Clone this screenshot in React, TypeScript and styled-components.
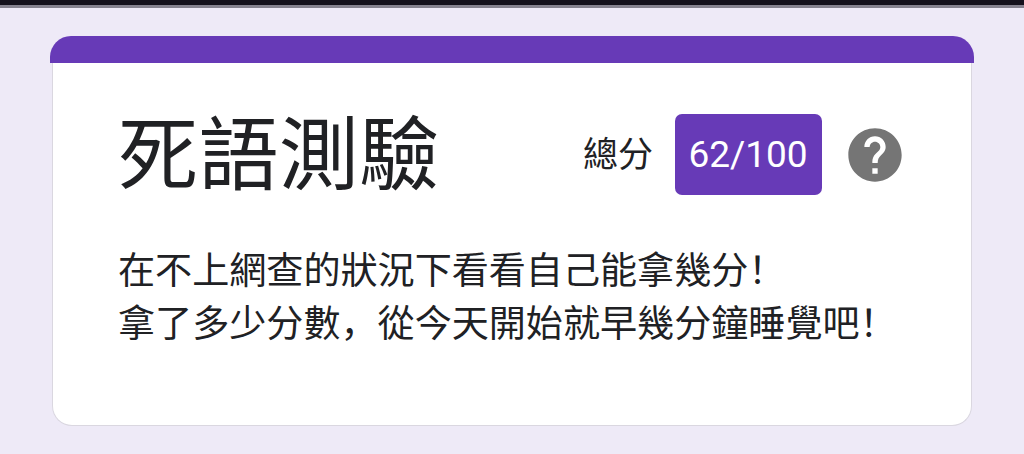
import React from "react";
import styled, { createGlobalStyle } from "styled-components";
import { MdHelp } from "react-icons/md";

const description = [
  "在不上網查的狀況下看看自己能拿幾分！",
  "拿了多少分數，從今天開始就早幾分鐘睡覺吧！",
];

export default function App() {
  return (
    <>
      <GlobalStyle />
      <Page lang="zh-Hans">
        <StatusEdge />
        <Form>
          <Accent />
          <Card>
            <Header>
              <Title>死語測驗</Title>
              <Score>
                <ScoreLabel>總分</ScoreLabel>
                <ScoreBadge>62/100</ScoreBadge>
                <HelpBtn type="button" aria-label="說明">
                  <MdHelp size={64} />
                </HelpBtn>
              </Score>
            </Header>
            <Description>
              {description.map((line) => (
                <Line key={line}>{line}</Line>
              ))}
            </Description>
          </Card>
        </Form>
      </Page>
    </>
  );
}

const GlobalStyle = createGlobalStyle`
  * {
    box-sizing: border-box;
  }

  body {
    margin: 0;
    background: #eeeaf7;
    font-family: "Noto Sans CJK SC", sans-serif;
    color: #202124;
  }
`;

const Page = styled.div`
  display: flex;
  flex-direction: column;
  height: 454px;
  overflow: hidden;
`;

const StatusEdge = styled.div`
  flex: none;
  height: 8px;
  background: #14111c;
  border-bottom: 3px solid #85828f;
`;

const Form = styled.main`
  flex: none;
  width: 924px;
  margin: 28px 0 0 50px;
`;

const Accent = styled.div`
  height: 26.5px;
  border-radius: 21px 21px 0 0;
  background: #673ab7;
`;

const Card = styled.section`
  height: 363.5px;
  margin: 0 2px;
  padding: 51.5px 69px 0 65px;
  background: #fff;
  border: 1px solid #dad7e0;
  border-top: 0;
  border-radius: 0 0 20px 20px;
`;

const Header = styled.header`
  display: flex;
  align-items: center;
  justify-content: space-between;
  height: 81px;
`;

const Title = styled.h1`
  margin: 0 0 12px;
  font-size: 80px;
  letter-spacing: 0.4px;
  line-height: 81px;
  font-weight: 400;
`;

const Score = styled.div`
  display: flex;
  align-items: center;
`;

const ScoreLabel = styled.span`
  margin-bottom: 6px;
  font-size: 35px;
  line-height: 48px;
`;

const ScoreBadge = styled.span`
  display: flex;
  align-items: center;
  justify-content: center;
  width: 147px;
  height: 81px;
  padding-right: 1px;
  margin-left: 22px;
  border-radius: 7px;
  background: #673ab7;
  color: #fff;
  font-family: Roboto, sans-serif;
  font-size: 37px;
`;

const HelpBtn = styled.button`
  display: flex;
  margin: 0 -5px 0 21px;
  padding: 0;
  border: 0;
  background: none;
  color: #757575;
`;

const Description = styled.div`
  margin-top: 47px;
`;

const Line = styled.p`
  margin: 0;
  font-size: 37.1px;
  line-height: 53px;
  white-space: nowrap;
`;
